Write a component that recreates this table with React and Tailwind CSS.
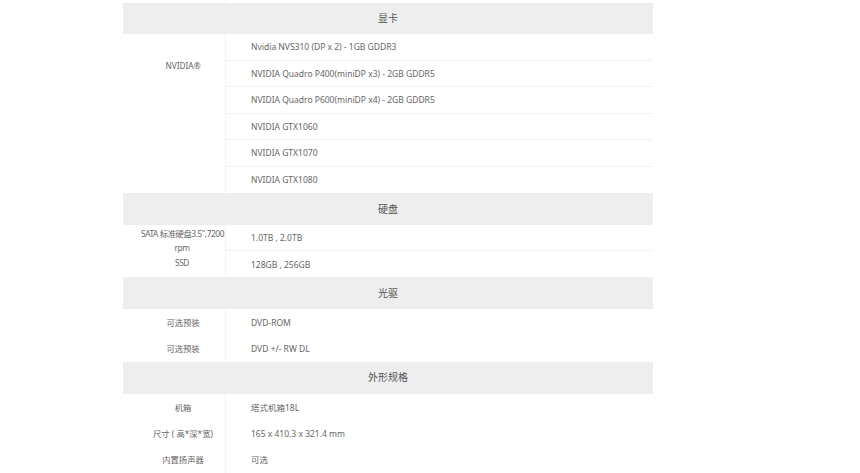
import React from "react";

const font = {
  fontFamily: '"Noto Sans", "Noto Sans CJK SC", sans-serif',
};

const sections = [
  {
    title: "显卡",
    headH: "h-[31px]",
    groups: [
      {
        label: ["NVIDIA®"],
        labelPad: "pt-[25px]",
        rowH: "h-[26.5px]",
        items: [
          "Nvidia NVS310 (DP x 2) - 1GB GDDR3",
          "NVIDIA Quadro P400(miniDP x3) - 2GB GDDR5",
          "NVIDIA Quadro P600(miniDP x4) - 2GB GDDR5",
          "NVIDIA GTX1060",
          "NVIDIA GTX1070",
          "NVIDIA GTX1080",
        ],
      },
    ],
  },
  {
    title: "硬盘",
    headH: "h-[32px]",
    groups: [
      {
        label: ["SATA 标准硬盘3.5\",7200", "rpm", "SSD"],
        labelPad: "pt-[1.5px] pr-[2px] tracking-[-0.4px]",
        rowH: "h-[26px]",
        items: ["1.0TB , 2.0TB", "128GB , 256GB"],
      },
    ],
  },
  {
    title: "光驱",
    headH: "h-[32px]",
    groups: [
      { label: ["可选预装"], center: true, rowH: "h-[26.3px]", items: ["DVD-ROM"] },
      { label: ["可选预装"], center: true, rowH: "h-[26.3px]", items: ["DVD +/- RW DL"] },
    ],
  },
  {
    title: "外形规格",
    headH: "h-[32.3px]",
    groups: [
      { label: ["机箱"], center: true, rowH: "h-[26.3px]", items: ["塔式机箱18L"] },
      { label: ["尺寸 ( 高*深*宽)"], center: true, rowH: "h-[26.3px]", items: ["165 x 410.3 x 321.4 mm"] },
      { label: ["内置扬声器"], center: true, rowH: "h-[26.3px]", items: ["可选"] },
    ],
  },
];

const Group = ({ group }) => (
  <div className="flex">
    {/* left label cell */}
    <div
      className={`w-[102px] pl-[18px] flex flex-col text-center text-[8.3px] leading-[14.5px] text-[#666] ${
        group.center ? "justify-center pt-[2px]" : group.labelPad
      }`}
    >
      {group.label.map((l, i) => (
        <span key={i} className="whitespace-nowrap">
          {l}
        </span>
      ))}
    </div>
    {/* right value cells */}
    <div className="flex-1 flex flex-col border-l border-[#f2f2f2]">
      {group.items.map((it, i) => (
        <div
          key={i}
          className={`${group.rowH} flex items-center pl-[25px] pt-[2px] text-[8.5px] text-[#666] ${
            i < group.items.length - 1 ? "border-b border-[#f2f2f2]" : ""
          }`}
        >
          {it}
        </div>
      ))}
    </div>
  </div>
);

const App = () => {
  return (
    <div className="w-[860px] h-[473px] bg-white overflow-hidden" style={font}>
      <div className="ml-[123px] w-[530px]">
        {/* tail of previous row */}
        <div className="flex h-[3px]">
          <div className="w-[102px]" />
          <div className="flex-1 border-l border-[#f2f2f2]" />
        </div>

        {sections.map((s) => (
          <div key={s.title}>
            <div
              className={`${s.headH} bg-[#eeeeee] flex items-center justify-center text-[10px] text-[#555]`}
            >
              {s.title}
            </div>
            {s.groups.map((g, i) => (
              <Group key={i} group={g} />
            ))}
          </div>
        ))}
      </div>
    </div>
  );
};

export default App;
